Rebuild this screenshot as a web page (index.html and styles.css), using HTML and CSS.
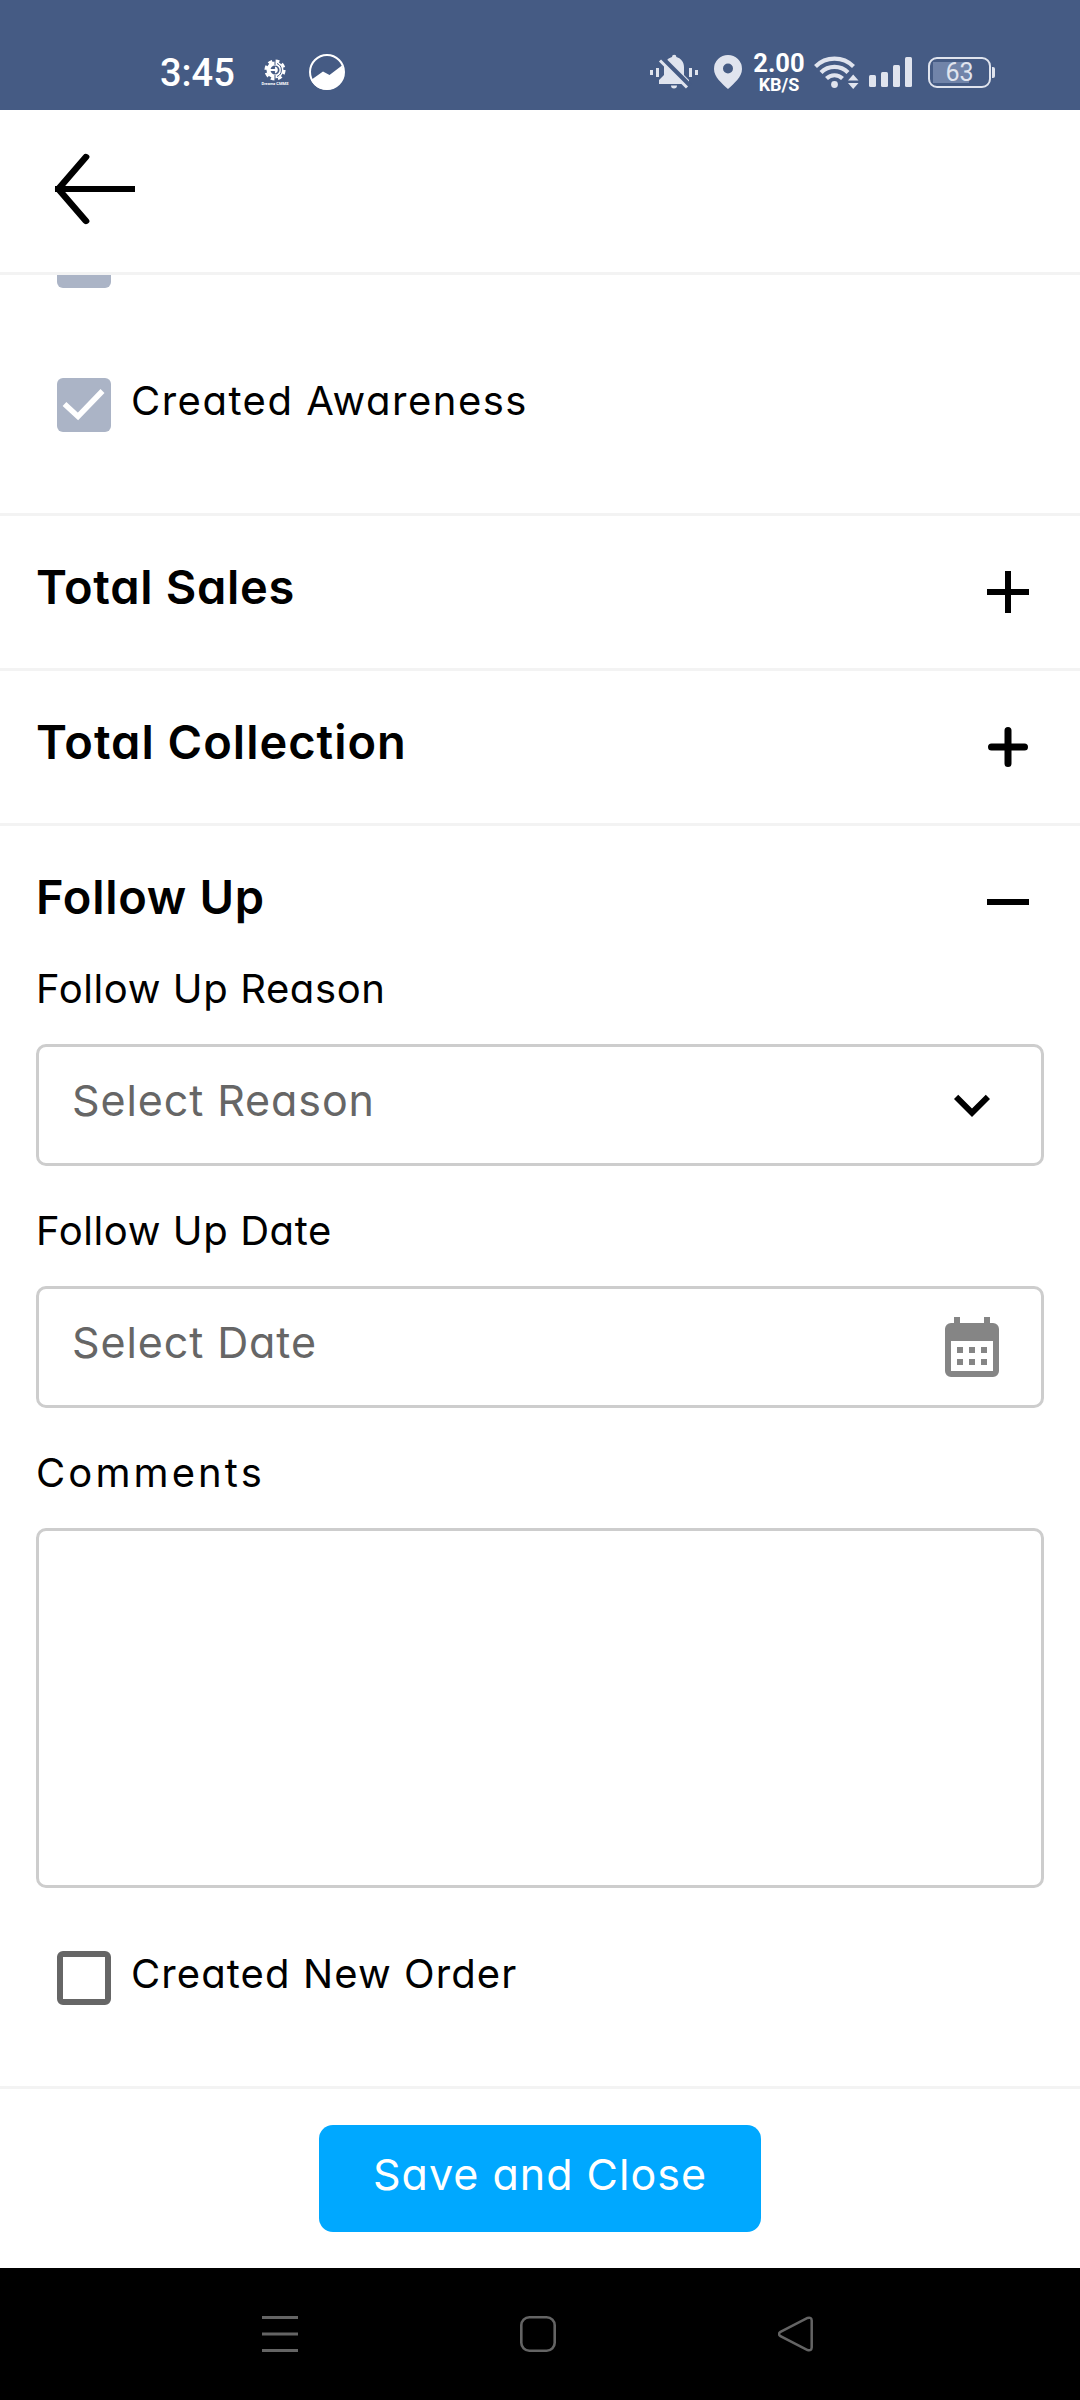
FILE: index.html
```html
<!DOCTYPE html>
<html lang="en">
<head>
<meta charset="utf-8">
<title>Follow Up</title>
<link rel="stylesheet" href="styles.css">
</head>
<body>
<div class="statusbar">
  <span class="clock">3:45</span>
  <div class="notif">
    <svg width="22" height="22" viewBox="0 0 22 22"><g fill="none" stroke="#fff"><circle cx="11" cy="11" r="6.500" stroke-width="4"/><circle cx="11" cy="11" r="9.300" stroke-width="2.600" stroke-dasharray="4.200 3.100"/><path d="M6 11h6M11 8.500a2.600 2.600 0 0 1 0 5" stroke-width="2"/></g><path d="M11 0v6M11 16v6M13 4.500a7 7 0 0 1 0 13" fill="none" stroke="#455b84" stroke-width="1"/></svg>
    <span class="notif-name">Dreamz CMMS</span>
  </div>
  <svg class="ring" width="36" height="36" viewBox="0 0 36 36"><circle cx="18" cy="18" r="17" fill="none" stroke="#fff" stroke-width="2"/><path d="M2 26L14 17.500L20.500 21L33 11.500A17 17 0 0 1 2 26z" fill="#fff"/></svg>
  <div class="system">
    <svg class="bell" width="48" height="36" viewBox="0 0 48 36"><g fill="#e0e4ee"><rect x="0" y="16" width="3" height="5"/><rect x="6" y="14" width="3" height="9"/><rect x="39" y="14" width="3" height="9"/><rect x="45" y="16" width="3" height="5"/><path d="M22 3a2.200 2.200 0 0 1 4.400 0C31.500 4.500 34 8.500 34 13v8l5 5v4H9v-4l5-5v-8c0-4.500 3-8.500 8-10zM21 31.500h6a3 3 0 0 1-6 0z"/></g><path d="M12 4L40 32" stroke="#455b84" stroke-width="5"/><path d="M10 6.500L37 33.500" stroke="#e0e4ee" stroke-width="3"/></svg>
    <svg class="pin" width="28" height="34" viewBox="0 0 28 34"><path fill="#e0e4ee" fill-rule="evenodd" d="M14 0a14 14 0 0 1 14 14c0 8-8 14.500-14 20C8 28.500 0 22 0 14A14 14 0 0 1 14 0zm0 8.500a5 5 0 1 0 0 10 5 5 0 0 0 0-10z"/></svg>
    <div class="speed"><span class="rate">2.00</span><span class="unit">KB/S</span></div>
    <svg class="wifi" width="45" height="36" viewBox="0 0 45 36"><g fill="none" stroke="#e0e4ee" stroke-width="4.200"><path d="M1.500 12.500a27 27 0 0 1 38 0"/><path d="M7 18.500a19 19 0 0 1 27 0"/><path d="M12.500 24.500a11.500 11.500 0 0 1 16 0"/></g><circle cx="20.500" cy="30.500" r="3.400" fill="#e0e4ee"/><path fill="#e0e4ee" d="M39.200 20.500l5.300 6H34zM39.200 35l5.300-6H34z"/></svg>
    <svg class="signal" width="43" height="32" viewBox="0 0 43 32"><g fill="#e0e4ee"><rect y="19" width="7" height="12" rx="1.500"/><rect x="12" y="16" width="7" height="15" rx="1.500"/><rect x="24" y="9" width="7" height="22" rx="1.500"/><rect x="36" y="1" width="7" height="30" rx="1.500"/></g></svg>
    <div class="battery"><span class="cell">63</span><i class="nub"></i></div>
  </div>
</div>
<header class="appbar">
  <svg width="84" height="72" viewBox="0 0 84 72" fill="none" stroke="#000" stroke-width="6"><path d="M4 36h80"/><path d="M29.500 4L5.500 36L29.500 68" stroke-linecap="round" stroke-linejoin="round"/></svg>
</header>
<main>
  <section class="checks">
    <div class="peek"></div>
    <div class="check">
      <span class="box checked"><svg width="54" height="54" viewBox="0 0 54 54"><path d="M7.500 26L21 38.500L45.500 13" fill="none" stroke="#fff" stroke-width="5.500"/></svg></span>
      <span class="check-label awareness">Created Awareness</span>
    </div>
  </section>
  <section class="row">
    <h2>Total Sales</h2>
    <svg width="72" height="72" viewBox="0 0 24 24"><path d="M5 11h6V5h2v6h6v2h-6v6h-2v-6H5z"/></svg>
  </section>
  <section class="row">
    <h2 class="collection">Total Collection</h2>
    <svg width="72" height="72" viewBox="0 0 72 72"><path d="M19.500 36h33M36 19.500v33" stroke="#000" stroke-width="7" stroke-linecap="round"/></svg>
  </section>
  <section class="follow">
    <div class="row open">
      <h2>Follow Up</h2>
      <svg width="72" height="72" viewBox="0 0 24 24"><path d="M5 11h14v2H5z"/></svg>
    </div>
    <div class="form">
      <div class="group">
        <div class="label">Follow Up Reason</div>
        <div class="field"><span class="placeholder">Select Reason</span><svg width="72" height="72" viewBox="0 0 24 24"><path d="M16.590 8.590L12 13.170 7.410 8.590 6 10l6 6 6-6z"/></svg></div>
      </div>
      <div class="group">
        <div class="label">Follow Up Date</div>
        <div class="field"><span class="placeholder">Select Date</span><svg width="72" height="72" viewBox="0 0 24 24"><path fill="#858585" fill-rule="evenodd" d="M6 2h2v2h8V2h2v2h1a2 2 0 0 1 2 2v14a2 2 0 0 1-2 2H5a2 2 0 0 1-2-2V6a2 2 0 0 1 2-2h1zM5 10v10h14V10zm2 2h2v2H7zm4 0h2v2h-2zm4 0h2v2h-2zm-8 4h2v2H7zm4 0h2v2h-2zm4 0h2v2h-2z"/></svg></div>
      </div>
      <div class="group">
        <div class="label comments">Comments</div>
        <div class="field area"></div>
      </div>
    </div>
    <div class="check order">
      <span class="box"></span>
      <span class="check-label">Created New Order</span>
    </div>
  </section>
</main>
<footer class="actions"><button class="save">Save and Close</button></footer>
<nav class="navbar">
  <svg class="menu" width="36" height="38" viewBox="0 0 36 38"><path d="M0 2.500h36M0 19h36M0 35.500h36" stroke="#646464" stroke-width="3"/></svg>
  <svg class="home" width="36" height="36" viewBox="0 0 36 36"><rect x="1.300" y="1.300" width="33.400" height="33.400" rx="8" fill="none" stroke="#646464" stroke-width="2.600"/></svg>
  <svg class="prev" width="36" height="36" viewBox="0 0 36 36"><path d="M2.500 15.800L29.500 2Q33.500.800 33.700 4.500V31.500Q33.500 35.200 29.500 34L2.500 20.200Q-.500 18 2.500 15.800z" fill="none" stroke="#646464" stroke-width="2.500"/></svg>
</nav>
</body>
</html>
```
FILE: styles.css
```css
* { box-sizing: border-box; }

body {
  margin: 0;
  width: 1080px;
  height: 2400px;
  display: flex;
  flex-direction: column;
  background: #fff;
  color: #000;
  font-family: Inter, sans-serif;
  font-feature-settings: "cv11";
  overflow: hidden;
}

svg { display: block; flex: none; }

.statusbar {
  height: 110px;
  padding: 34px 85px 0 160px;
  display: flex;
  align-items: center;
  flex: none;
  background: #455b84;
  color: #fff;
  font-family: Roboto, sans-serif;
}
.clock { width: 102px; padding-top: 2px; font-size: 38px; font-weight: 500; white-space: nowrap; }
.notif { width: 26px; display: flex; flex-direction: column; align-items: center; }
.notif-name { font-size: 4px; line-height: 5px; font-weight: 700; white-space: nowrap; }
.ring { margin-left: 21px; }
.system { margin-left: auto; display: flex; align-items: center; }
.pin { margin-left: 16px; }
.speed {
  width: 52px;
  margin: 2px 9px 0 11px;
  display: flex;
  flex-direction: column;
  align-items: center;
  white-space: nowrap;
}
.rate { font-size: 25.5px; line-height: 19px; font-weight: 700; }
.unit { margin-top: 4px; font-size: 18px; line-height: 16px; font-weight: 700; }
.signal { margin-left: 10px; }
.battery { margin-left: 16px; display: flex; align-items: center; gap: 1px; }
.cell {
  width: 63px;
  height: 31px;
  padding-top: 1px;
  display: flex;
  align-items: center;
  justify-content: center;
  border: 2.5px solid #e0e4ee;
  border-radius: 9px;
  background: linear-gradient(#7184a9, #7184a9) 3px 3px / 36px 21px no-repeat;
  color: #e0e4ee;
  font-size: 25px;
}
.nub { width: 3px; height: 11px; background: #e0e4ee; border-radius: 0 2px 2px 0; }

.appbar {
  height: 165px;
  padding: 0 0 4px 51px;
  display: flex;
  align-items: center;
  flex: none;
  border-bottom: 3px solid #f3f3f3;
}
.appbar svg { overflow: visible; }
.appbar path + path { transform: translateX(1px) scaleX(1.15); }

main { flex: 1; }

.checks { height: 241px; border-bottom: 3px solid #f3f3f3; }
.peek {
  width: 54px;
  height: 13px;
  margin: 0 0 90px 57px;
  background: #abb4c6;
  border-radius: 0 0 6px 6px;
}
.check { height: 54px; padding-left: 57px; display: flex; align-items: center; gap: 20px; }
.box { width: 54px; height: 54px; border: 6px solid #666; border-radius: 6px; }
.box.checked { border: 0; background: #abb4c6; }
.check-label { padding-bottom: 9px; font-size: 40px; letter-spacing: 1.1px; }
.awareness { letter-spacing: 1.5px; }

.row {
  height: 155px;
  padding: 0 36px;
  display: flex;
  align-items: center;
  justify-content: space-between;
  border-bottom: 3px solid #f3f3f3;
}
.row.open { height: 133px; padding-top: 19px; border: 0; }
h2 { margin: 0; padding-bottom: 11px; font-size: 47px; font-weight: 600; letter-spacing: 0.7px; }
.collection { letter-spacing: 1px; }

.form { padding: 0 36px; display: flex; flex-direction: column; gap: 35px; }
.label {
  margin: 0 0 25px;
  font-size: 40px;
  line-height: 60px;
  letter-spacing: 0.6px;
}
.comments { letter-spacing: 3.1px; }
.field {
  height: 122px;
  padding: 0 33px;
  display: flex;
  align-items: center;
  justify-content: space-between;
  border: 3px solid #cdcdcd;
  border-radius: 10px;
}
.area { height: 360px; }
.placeholder { padding-bottom: 11px; color: #666; font-size: 43px; letter-spacing: 0.9px; }
.order { margin-top: 63px; }

.actions {
  height: 182px;
  flex: none;
  display: flex;
  align-items: center;
  justify-content: center;
  border-top: 3px solid #f3f3f3;
}
.save {
  width: 442px;
  height: 107px;
  padding: 0 0 10px;
  border: 0;
  border-radius: 14px;
  background: #00a8ff;
  color: #fff;
  font: 400 43px Inter, sans-serif;
  font-feature-settings: "cv11";
  letter-spacing: 1px;
}

.navbar {
  height: 132px;
  flex: none;
  display: flex;
  align-items: center;
  background: #000;
}
.menu { margin-left: 262px; }
.home { margin-left: 222px; }
.prev { margin-left: 222px; }
```
